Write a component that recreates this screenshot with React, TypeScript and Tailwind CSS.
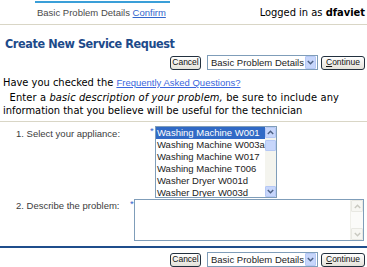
import React from "react";

const tahoma = "font-['DejaVu_Sans_Condensed','DejaVu_Sans',sans-serif]";
const thin = "font-['Liberation_Sans',Arial,sans-serif]";

const APPLIANCES = [
  "Washing Machine W001",
  "Washing Machine W003a",
  "Washing Machine W017",
  "Washing Machine T006",
  "Washer Dryer W001d",
  "Washer Dryer W003d",
];

function Chevron({ up = false, color = "#4d6185" }: { up?: boolean; color?: string }) {
  return (
    <svg width="7" height="5" viewBox="0 0 7 5" className={up ? "rotate-180" : ""}>
      <polyline points="0.8,1 3.5,3.8 6.2,1" fill="none" stroke={color} strokeWidth="1.4" />
    </svg>
  );
}

function XpButton({ children, w }: { children: React.ReactNode; w: string }) {
  return (
    <button
      type="button"
      className={`${w} h-[14px] flex items-center justify-center rounded-[3px] border border-[#22303e] bg-gradient-to-b from-white to-[#e4e2da] text-[8.5px] leading-none text-[#111] ${thin}`}
    >
      {children}
    </button>
  );
}

function StepSelect() {
  return (
    <div className={`w-[111px] h-[15px] flex items-center border border-[#7f9db9] bg-white ${thin}`}>
      <span className="flex-1 pl-[3px] text-[9.5px] leading-none text-[#222] whitespace-nowrap overflow-hidden">
        Basic Problem Details
      </span>
      <span className="w-[11px] h-[13px] mr-px flex items-center justify-center rounded-[1px] bg-[#c7d6fb] border border-[#b5c8f5]">
        <Chevron />
      </span>
    </div>
  );
}

function ActionRow() {
  return (
    <div className="flex items-center justify-end pr-[2px]">
      <XpButton w="w-[31px]">Cancel</XpButton>
      <div className="ml-[6px]">
        <StepSelect />
      </div>
      <div className="ml-[3px]">
        <XpButton w="w-[44px]">
          <span>
            <span className="underline">C</span>ontinue
          </span>
        </XpButton>
      </div>
    </div>
  );
}

export default function App() {
  return (
    <div className={`w-[367px] h-[267px] overflow-hidden bg-white text-black ${tahoma}`}>
      {/* Header */}
      <div className="flex h-[25px] border-b border-[#d9d6c6]">
        <div className={`ml-[35px] mt-px w-[135px] border-t-2 border-[#3a9fd8] pt-[4px] pl-[2px] text-[9.5px] leading-[12px] text-[#4a4a4a] whitespace-nowrap ${thin}`}>
          Basic Problem Details{" "}
          <a href="#" className="text-[#3366cc] underline">
            Confirm
          </a>
        </div>
        <div className="ml-auto pr-[2px] pt-[6px] text-[11px] leading-[13px] whitespace-nowrap">
          Logged in as <b>dfaviet</b>
        </div>
      </div>

      {/* Title */}
      <h1 className="mt-[11px] pl-[5px] text-[12.5px] leading-[15px] font-bold tracking-[-0.4px] text-[#1d4a8a]">
        Create New Service Request
      </h1>

      <div className="mt-[4px]">
        <ActionRow />
      </div>

      {/* Intro */}
      <p className="mt-[6px] pl-[3px] text-[11px] leading-[14px] whitespace-nowrap">
        Have you checked the{" "}
        <a href="#" className={`text-[9.5px] text-[#3a66dd] underline ${thin}`}>
          Frequently Asked Questions?
        </a>
      </p>
      <p className="mt-px pl-[3px] text-[11px] leading-[13px] whitespace-nowrap">
        <span className="tracking-[0.12px]">
          &nbsp;&nbsp;Enter a <i>basic description of your problem,</i> be sure to include any
        </span>
        <br />
        information that you believe will be useful for the technician
      </p>
      <div className="mt-[4px] h-px bg-[#d9d6c6]" />

      {/* Form */}
      <div className={`mt-[4px] text-[9.5px] text-[#3c3c3c] ${thin}`}>
        <div className="flex">
          <div className="pl-[16px] w-[150px] pt-[2px] leading-[12px]">1. Select your appliance:</div>
          <div className="w-[5px] text-[#3366cc] leading-[10px]">*</div>
          <div className="w-[122px] h-[72px] flex border border-[#7f9db9] bg-white">
            <div className="flex-1 overflow-hidden">
              {APPLIANCES.map((a, i) => (
                <div
                  key={a}
                  className={`h-[12px] pl-[1px] leading-[12px] whitespace-nowrap ${
                    i === 0 ? "bg-[#316ac5] text-white" : "text-[#222]"
                  }`}
                >
                  {a}
                </div>
              ))}
            </div>
            <div className="w-[11px] flex flex-col bg-[#f4f4ee]">
              <div className="h-[11px] flex items-center justify-center bg-[#c7d6fb] border border-[#b5c8f5] rounded-[1px]">
                <Chevron up />
              </div>
              <div className="mt-[2px] h-[11px] bg-[#c7d6fb] border border-[#b5c8f5] rounded-[1px]" />
              <div className="flex-1" />
              <div className="h-[11px] flex items-center justify-center bg-[#c7d6fb] border border-[#b5c8f5] rounded-[1px]">
                <Chevron />
              </div>
            </div>
          </div>
        </div>

        <div className="mt-px flex">
          <div className="pl-[16px] w-[130px] pt-[1px] leading-[12px]">2. Describe the problem:</div>
          <div className="w-[4px] text-[#3366cc] leading-[10px]">*</div>
          <div className="w-[230px] h-[42px] flex border border-[#7f9db9] bg-white">
            <div className="flex-1" />
            <div className="w-[13px] flex flex-col bg-[#fbfbf9] border-l border-[#f0f0ea]">
              <div className="h-[12px] flex items-center justify-center border border-[#e8e8e2] rounded-[1px] bg-[#f7f7f3]">
                <Chevron up color="#c9c9c1" />
              </div>
              <div className="flex-1" />
              <div className="h-[12px] flex items-center justify-center border border-[#e8e8e2] rounded-[1px] bg-[#f7f7f3]">
                <Chevron color="#c9c9c1" />
              </div>
            </div>
          </div>
        </div>
      </div>

      <div className="mt-[5px] h-[2px] bg-[#1f4e8c]" />
      <div className="mt-[4px]">
        <ActionRow />
      </div>
    </div>
  );
}
